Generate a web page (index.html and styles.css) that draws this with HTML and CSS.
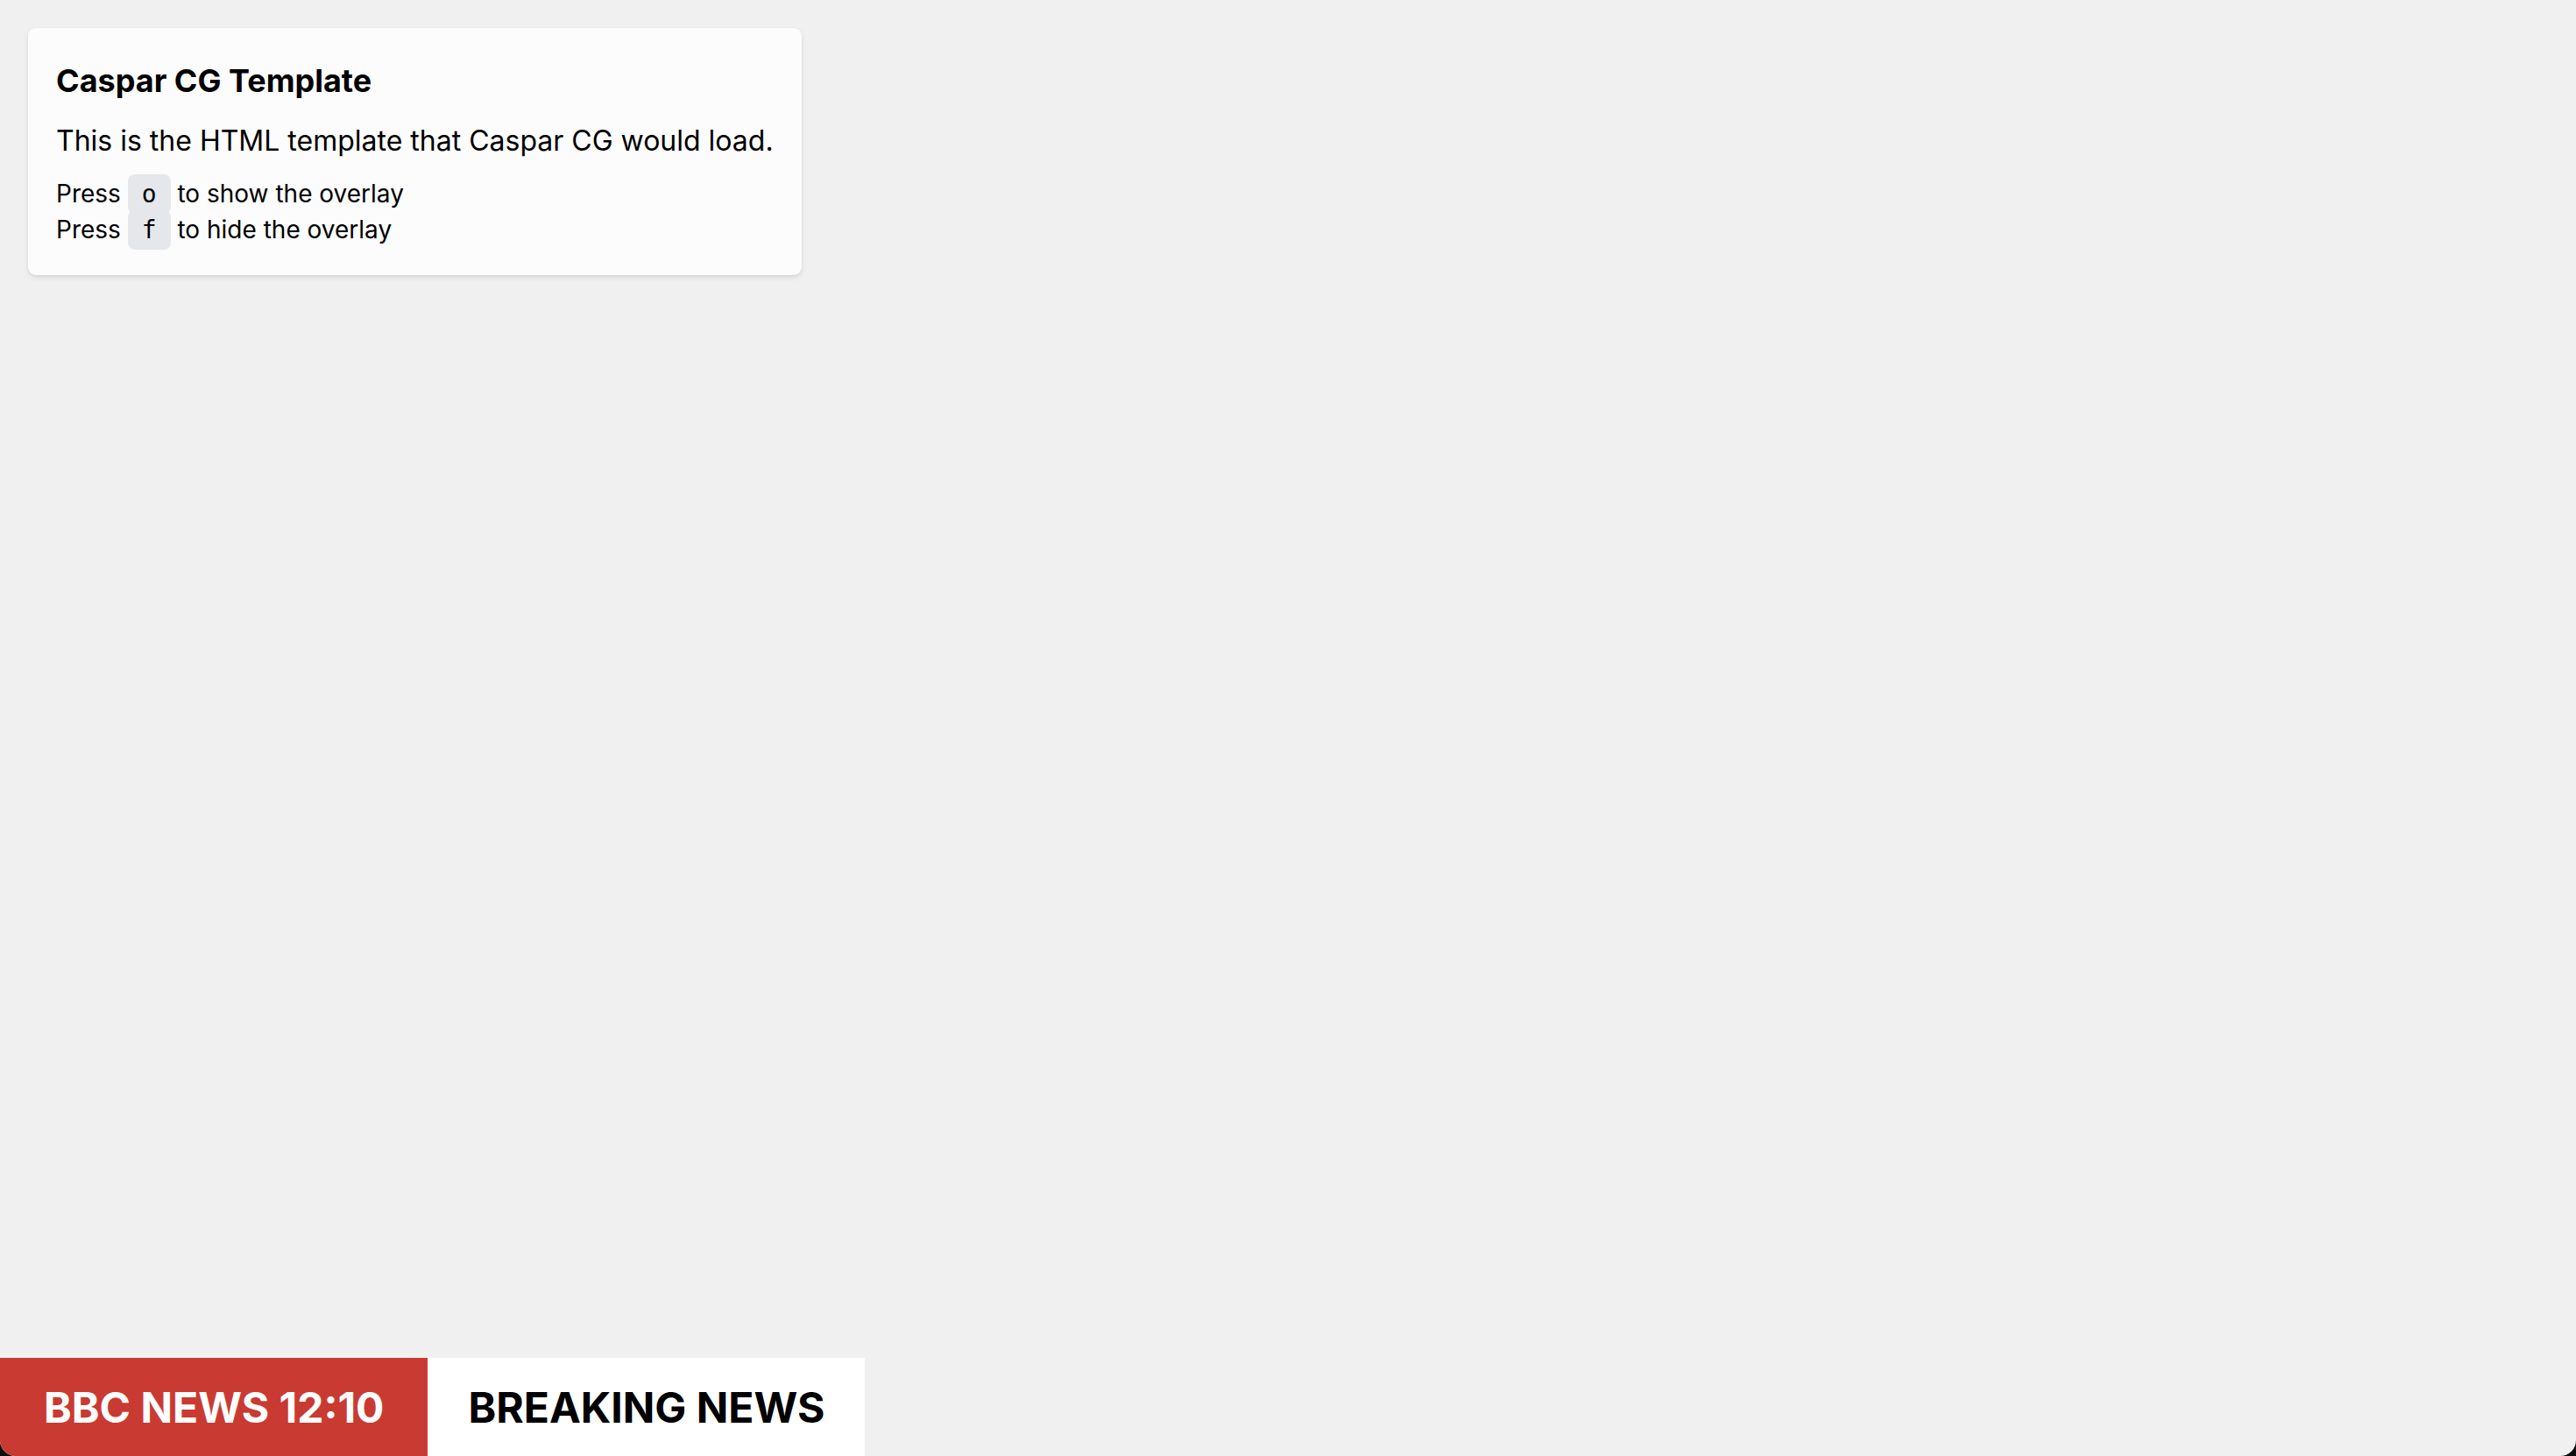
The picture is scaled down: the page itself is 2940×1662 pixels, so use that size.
FILE: index.html
```html
<!DOCTYPE html>
<html lang="en">
<head>
<meta charset="utf-8">
<title>Caspar CG Template</title>
<link rel="stylesheet" href="styles.css">
</head>
<body>
<div class="screen">
  <div class="card">
    <h1 class="card-title">Caspar CG Template</h1>
    <p class="card-text">This is the HTML template that Caspar CG would load.</p>
    <div class="keys">
      <div class="key-line">Press <kbd class="kbd">o</kbd> to show the overlay</div>
      <div class="key-line">Press <kbd class="kbd">f</kbd> to hide the overlay</div>
    </div>
  </div>
  <div class="ticker">
    <div class="ticker-brand">BBC NEWS 12:10</div>
    <div class="ticker-headline">BREAKING NEWS</div>
  </div>
</div>
</body>
</html>
```
FILE: styles.css
```css
html {
  background: #0d0d0d;
}
body {
  margin: 0;
  font-family: Inter, "Noto Sans", sans-serif;
  color: #000;
}
.screen {
  min-height: 100vh;
  box-sizing: border-box;
  background: #f0f0f0;
  border-radius: 0 0 18px 18px;
  overflow: hidden;
  display: flex;
  flex-direction: column;
  align-items: flex-start;
  padding-top: 32px;
}
.card {
  margin-left: 32px;
  padding: 32px 32px 31px;
  background: #fcfcfc;
  border-radius: 9px;
  box-shadow: 0 3px 6px rgba(0, 0, 0, 0.08), 0 1px 3px rgba(0, 0, 0, 0.06);
}
.card-title {
  margin: 0;
  font-size: 36px;
  line-height: 56px;
  font-weight: 700;
}
.card-text {
  margin: 17px 0 0;
  font-size: 32px;
  line-height: 48px;
}
.keys {
  margin-top: 16px;
  font-size: 28px;
  line-height: 40px;
}
.kbd {
  font-family: "DejaVu Sans Mono", "Liberation Mono", monospace;
  font-size: 28px;
  background: #e5e7eb;
  border-radius: 8px;
  padding: 6px 16px;
}
.ticker {
  margin-top: auto;
  display: flex;
  height: 112px;
}
.ticker-brand,
.ticker-headline {
  display: flex;
  align-items: center;
  font-size: 48px;
  font-weight: 700;
}
.ticker-brand {
  padding: 0 50px;
  background: #c93a32;
  color: #fff;
}
.ticker-headline {
  padding: 0 46px;
  background: #fff;
  color: #000;
}
```
